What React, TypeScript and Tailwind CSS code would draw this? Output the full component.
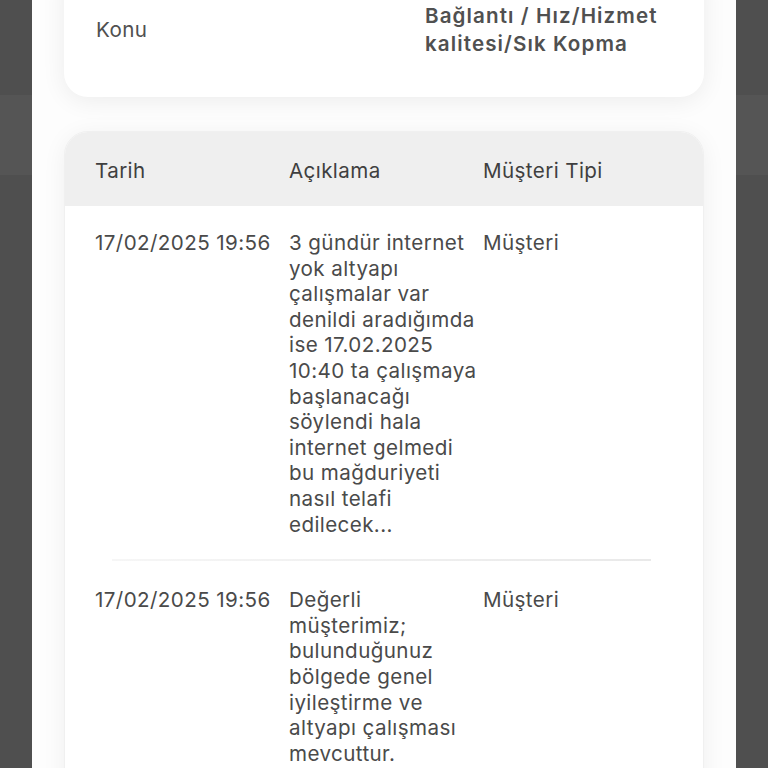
import React from "react";

const rows = [
  {
    date: "17/02/2025 19:56",
    text: "3 gündür internet yok altyapı çalışmalar var denildi aradığımda ise 17.02.2025 10:40 ta çalışmaya başlanacağı söylendi hala internet gelmedi bu mağduriyeti nasıl telafi edilecek...",
    type: "Müşteri",
  },
  {
    date: "17/02/2025 19:56",
    text: "Değerli müşterimiz; bulunduğunuz bölgede genel iyileştirme ve altyapı çalışması mevcuttur. Çalışmalar tamamlandığında hizmetiniz normale dönecektir.",
    type: "Müşteri",
  },
];

export default function App() {
  return (
    <div
      className="relative h-[768px] w-[768px] overflow-hidden bg-[#4f4f4f]"
      style={{ fontFamily: "Inter, 'Noto Sans', sans-serif" }}
    >
      <div className="absolute left-0 right-0 top-[95px] h-[80px] bg-[#555555]" />
      <div className="relative mx-[32px] flex h-full flex-col bg-[#fdfdfd] px-[32px]">
        <div className="-mt-[40px] flex shrink-0 items-center rounded-[24px] bg-white pb-[39px] pl-[32px] pr-[10px] pt-[42px] shadow-[0_4px_24px_rgba(0,0,0,0.07)]">
          <div className="w-[329px] text-[20.6px] tracking-[0.4px] text-[#505050]">Konu</div>
          <div className="text-[20.6px] font-semibold leading-[28px] tracking-[1.1px] text-[#505050]">
            Bağlantı / Hız/Hizmet
            <br />
            kalitesi/Sık Kopma
          </div>
        </div>

        <div className="mt-[34px] shrink-0 overflow-hidden rounded-[24px] border border-[#f0f0f0] bg-white shadow-[0_4px_24px_rgba(0,0,0,0.06)]">
          <div className="grid h-[74px] grid-cols-[194px_194px_1fr] items-center bg-[#efefef] pl-[30px] pt-[4px] text-[20.6px] tracking-[0.4px] text-[#3f3f3f]">
            <div>Tarih</div>
            <div>Açıklama</div>
            <div>Müşteri Tipi</div>
          </div>
          {rows.map((r, i) => (
            <div key={i}>
              {i > 0 && <div className="ml-[47px] mr-[52px] h-[2px] bg-gradient-to-r from-[#f6f6f6] to-[#e9e9e9]" />}
              <div
                className={`grid grid-cols-[194px_194px_1fr] pl-[30px] text-[20.6px] leading-[25.6px] tracking-[0.4px] text-[#4a4a4a] ${
                  i === 0 ? "pb-[22px] pt-[24px]" : "pb-[24px] pt-[26px]"
                }`}
              >
                <div className="whitespace-nowrap">{r.date}</div>
                <div className="pr-[4px]">{r.text}</div>
                <div>{r.type}</div>
              </div>
            </div>
          ))}
        </div>
      </div>
    </div>
  );
}
